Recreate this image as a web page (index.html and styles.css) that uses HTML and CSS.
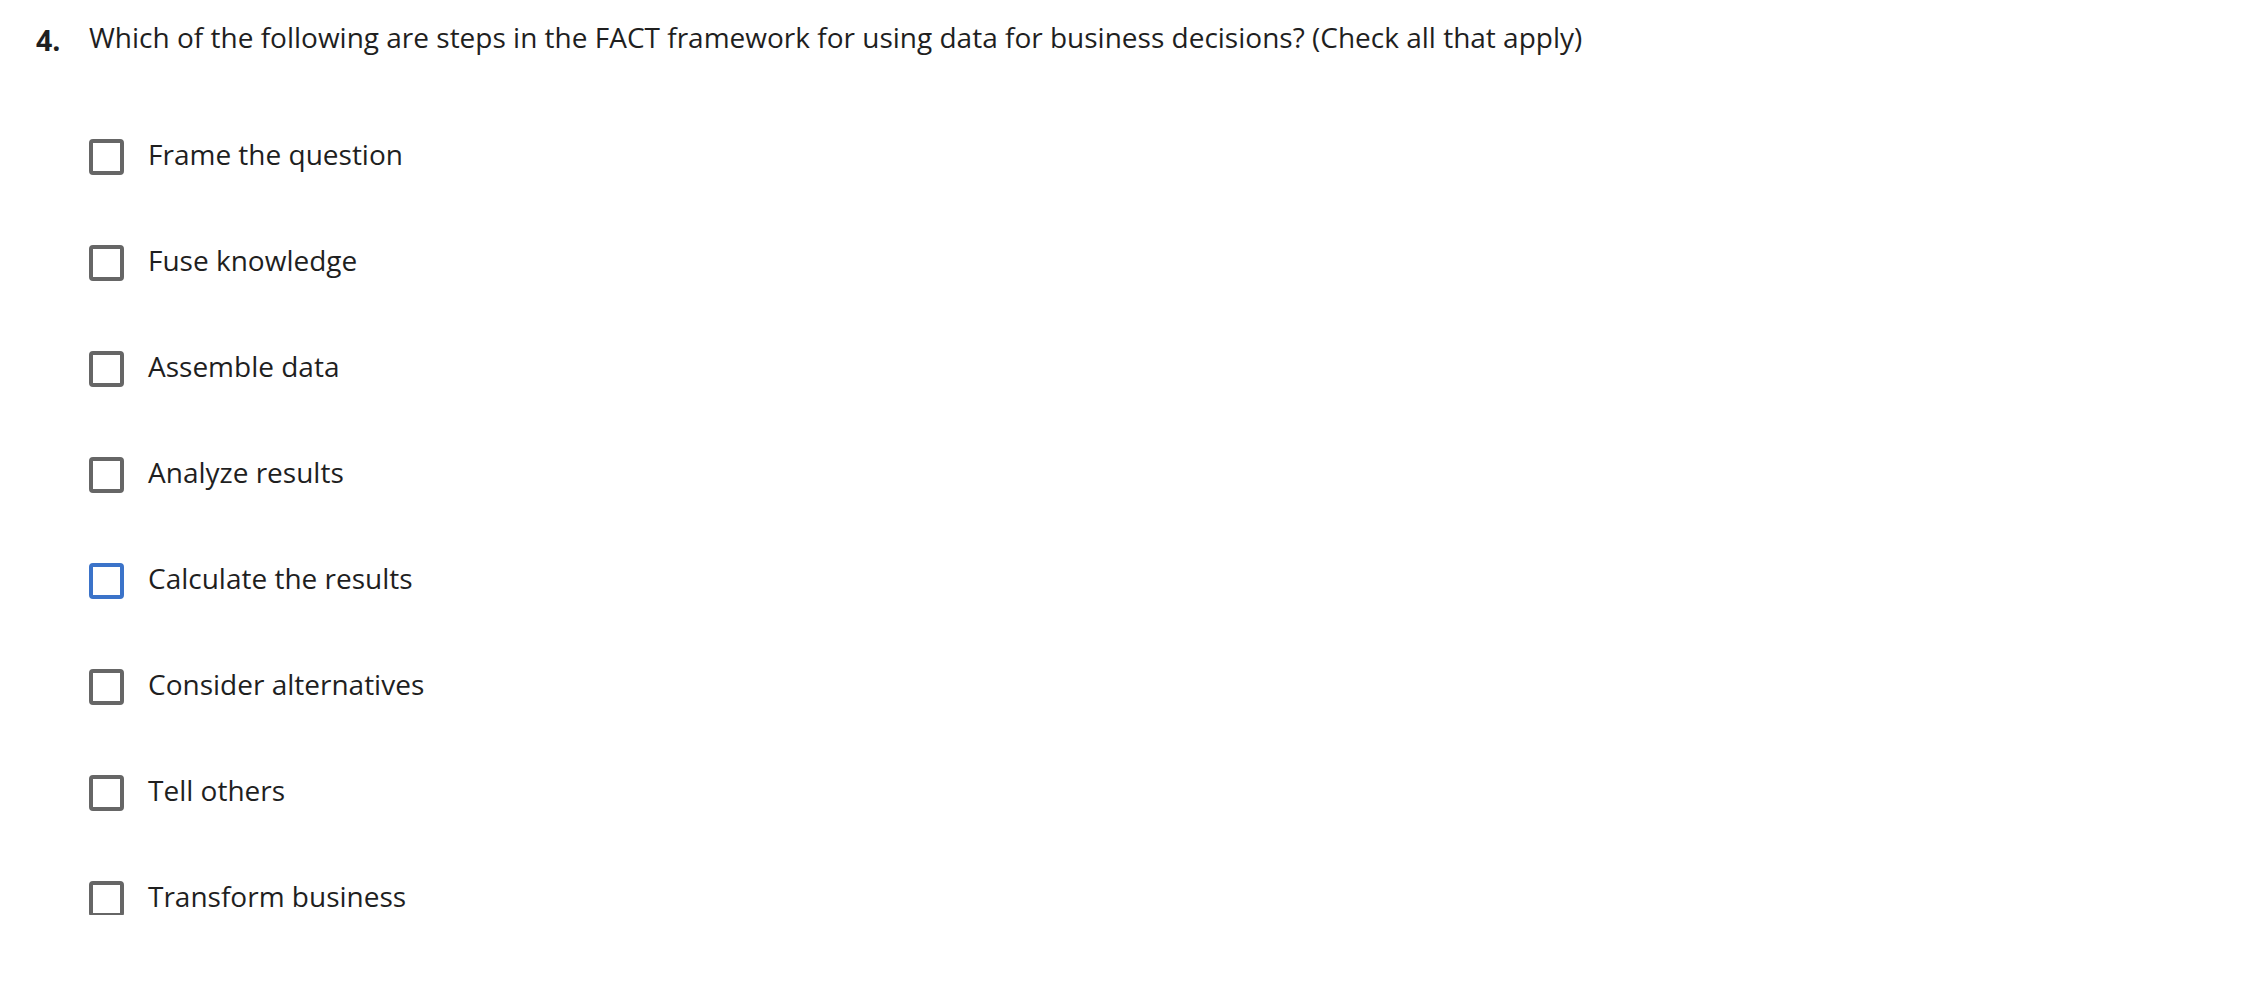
FILE: index.html
```html
<!DOCTYPE html>
<html lang="en">
<head>
<meta charset="utf-8">
<title>Question 4</title>
<link rel="stylesheet" href="styles.css">
</head>
<body>
<div class="question">
  <div class="q-head">
    <span class="q-num">4.</span>
    <span class="q-text">Which of the following are steps in the FACT framework for using data for business decisions? (Check all that apply)</span>
  </div>
  <ul class="options">
    <li class="option"><span class="box"></span><span class="label">Frame the question</span></li>
    <li class="option"><span class="box"></span><span class="label">Fuse knowledge</span></li>
    <li class="option"><span class="box"></span><span class="label">Assemble data</span></li>
    <li class="option"><span class="box"></span><span class="label">Analyze results</span></li>
    <li class="option"><span class="box focus"></span><span class="label">Calculate the results</span></li>
    <li class="option"><span class="box"></span><span class="label">Consider alternatives</span></li>
    <li class="option"><span class="box"></span><span class="label">Tell others</span></li>
    <li class="option"><span class="box"></span><span class="label">Transform business</span></li>
  </ul>
</div>
</body>
</html>
```
FILE: styles.css
```css
html, body {
  margin: 0;
  padding: 0;
  background: #ffffff;
}
body {
  font-family: "Open Sans", "Noto Sans", sans-serif;
  font-size: 28px;
  color: #1f1f1f;
}
.question {
  padding: 18px 0 0 36px;
}
.q-head {
  display: flex;
  align-items: flex-start;
  line-height: 38px;
}
.q-num {
  width: 53px;
  font-weight: 700;
  font-size: 28.5px;
  padding-top: 3px;
  color: #1f1f1f;
}
.q-text {
  white-space: nowrap;
}
.options {
  list-style: none;
  margin: 76px 0 0 53px;
  padding: 0;
  display: flex;
  flex-direction: column;
  gap: 68px;
}
.option {
  display: flex;
  align-items: flex-start;
  height: 38px;
  line-height: 38px;
  gap: 24px;
}
.box {
  box-sizing: border-box;
  width: 35px;
  height: 36px;
  margin-top: 4px;
  border: 4px solid #666666;
  border-radius: 4px;
  flex: none;
}
.box.focus {
  border-color: #3b73c9;
}
```
